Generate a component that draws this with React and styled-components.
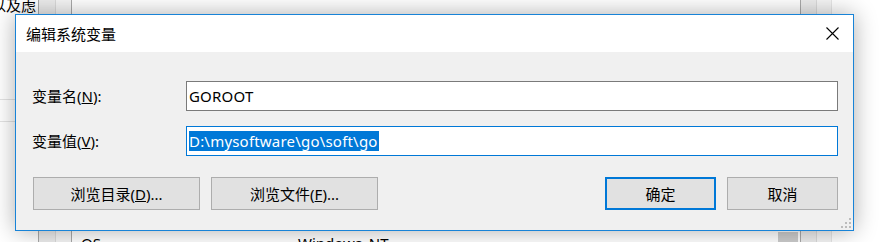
import React from 'react';
import styled, { createGlobalStyle } from 'styled-components';

const GlobalStyle = createGlobalStyle`
  html, body {
    margin: 0;
    padding: 0;
    width: 892px;
    height: 242px;
    overflow: hidden;
    background: #ffffff;
  }
  body {
    font-family: "Noto Sans", "Noto Sans CJK SC", sans-serif;
  }
`;

const UI_FONT = `"Noto Sans", "Noto Sans CJK SC", sans-serif`;

/* ---------- window behind the dialog ---------- */

const Desktop = styled.div`
  position: relative;
  width: 892px;
  height: 242px;
  overflow: hidden;
`;

const Backdrop = styled.div`
  display: flex;
  height: 100%;
  font-family: ${UI_FONT};
  font-size: 15px;
  color: #000;
`;

const Col = styled.div`
  width: ${(p) => (p.$w ? `${p.$w}px` : 'auto')};
  flex: ${(p) => (p.$w ? '0 0 auto' : '1')};
  background: ${(p) => p.$bg || '#fff'};
  border-left: ${(p) => (p.$line ? `1px solid ${p.$line}` : 'none')};
  display: flex;
  flex-direction: column;
  box-sizing: border-box;
`;

const FirstCol = styled(Col)`
  background:
    linear-gradient(#e3e3e3, #e3e3e3) 0 99px / 100% 1px no-repeat,
    linear-gradient(#e3e3e3, #e3e3e3) 0 121px / 100% 1px no-repeat,
    #fff;
`;

const BackText = styled.div`
  margin: -4px 0 0 -9px;
  white-space: nowrap;
  line-height: 18px;
`;

const Spacer = styled.div`
  flex: 1;
`;

const ListRow = styled.div`
  display: flex;
  align-items: flex-start;
  height: 10px;
`;

const Cell = styled.div`
  width: ${(p) => p.$w}px;
  box-sizing: border-box;
  padding-left: ${(p) => p.$pad || 0}px;
  line-height: 22px;
  white-space: nowrap;
`;

const GreyBlock = styled.div`
  width: 20px;
  height: 10px;
  margin-left: auto;
  margin-right: 2px;
  background: #cccccc;
`;

/* ---------- dialog ---------- */

const Dialog = styled.div`
  position: absolute;
  left: 15px;
  top: 14px;
  width: 839px;
  height: 217px;
  box-sizing: border-box;
  border: 1px solid #1883d7;
  background: #f0f0f0;
  box-shadow: 0 0 22px rgba(0, 0, 0, 0.32);
  display: flex;
  flex-direction: column;
  font-family: ${UI_FONT};
  font-size: 15px;
  color: #000;
`;

const TitleBar = styled.div`
  height: 37px;
  background: #fff;
  display: flex;
  align-items: center;
  padding-left: 10px;
  padding-right: 14px;
`;

const Title = styled.div`
  flex: 1;
  font-size: 15px;
  line-height: 20px;
`;

const CloseButton = styled.div`
  width: 14px;
  height: 14px;
  display: flex;
  align-items: center;
  justify-content: center;
`;

const Body = styled.div`
  flex: 1;
  position: relative;
  padding: 29px 15px 0 16px;
  display: flex;
  flex-direction: column;
`;

const FieldRow = styled.div`
  display: flex;
  align-items: center;
  margin-bottom: 15px;
`;

const Label = styled.div`
  width: 154px;
  flex: 0 0 auto;
  line-height: 20px;
  white-space: nowrap;
`;

const Input = styled.div`
  flex: 1;
  height: 30px;
  box-sizing: border-box;
  background: #fff;
  border: 1px solid ${(p) => (p.$focused ? '#0078d7' : '#7a7a7a')};
  display: flex;
  align-items: center;
  padding-left: 2px;
  white-space: nowrap;
  letter-spacing: 0.2px;
`;

const Selected = styled.span`
  background: #0078d7;
  color: #fff;
  line-height: 20px;
  padding-right: 1px;
`;

const ButtonRow = styled.div`
  display: flex;
  align-items: center;
  gap: 11px;
  margin-top: 6px;
  padding-left: 1px;
`;

const Button = styled.div`
  width: ${(p) => p.$w}px;
  height: 33px;
  box-sizing: border-box;
  background: #e1e1e1;
  border: ${(p) => (p.$default ? '2px solid #0078d7' : '1px solid #adadad')};
  display: flex;
  align-items: center;
  justify-content: center;
  white-space: nowrap;
  margin-left: ${(p) => (p.$push ? 'auto' : '0')};
`;

const Grip = styled.svg`
  position: absolute;
  right: 2px;
  bottom: 2px;
`;

function CloseIcon() {
  return (
    <svg width="13" height="13" viewBox="0 0 13 13">
      <path d="M0.5 0.5 L12.5 12.5 M12.5 0.5 L0.5 12.5" stroke="#000" strokeWidth="1.1" />
    </svg>
  );
}

function ResizeGrip() {
  const dots = [
    [8, 0],
    [4, 4], [8, 4],
    [0, 8], [4, 8], [8, 8],
  ];
  return (
    <Grip width="10" height="10" viewBox="0 0 10 10">
      {dots.map(([x, y]) => (
        <rect key={`${x}-${y}`} x={x} y={y} width="2" height="2" fill="#bcbcbc" />
      ))}
    </Grip>
  );
}

export default function App() {
  return (
    <Desktop>
      <GlobalStyle />
      <Backdrop>
        <FirstCol $w={38}>
          <BackText>以及虑</BackText>
        </FirstCol>
        <Col $w={17} $bg="#ececec" $line="#a9a9a9" />
        <Col $w={16} $bg="#f5f5f5" $line="#dadada" />
        <Col $line="#a9a9a9">
          <Spacer />
          <ListRow>
            <Cell $w={226} $pad={9}>OS</Cell>
            <Cell $w={200}>Windows_NT</Cell>
            <GreyBlock />
          </ListRow>
        </Col>
        <Col $w={16} $bg="#ececec" $line="#a9a9a9" />
        <Col $w={15} $bg="#f5f5f5" $line="#dadada" />
        <Col $w={61} $line="#e6e6e6" />
      </Backdrop>

      <Dialog>
        <TitleBar>
          <Title>编辑系统变量</Title>
          <CloseButton>
            <CloseIcon />
          </CloseButton>
        </TitleBar>
        <Body>
          <FieldRow>
            <Label>变量名(<u>N</u>):</Label>
            <Input>GOROOT</Input>
          </FieldRow>
          <FieldRow>
            <Label>变量值(<u>V</u>):</Label>
            <Input $focused>
              <Selected>D:\mysoftware\go\soft\go</Selected>
            </Input>
          </FieldRow>
          <ButtonRow>
            <Button $w={167}>浏览目录(<u>D</u>)...</Button>
            <Button $w={167}>浏览文件(<u>F</u>)...</Button>
            <Button $w={111} $default $push>确定</Button>
            <Button $w={111}>取消</Button>
          </ButtonRow>
          <ResizeGrip />
        </Body>
      </Dialog>
    </Desktop>
  );
}
